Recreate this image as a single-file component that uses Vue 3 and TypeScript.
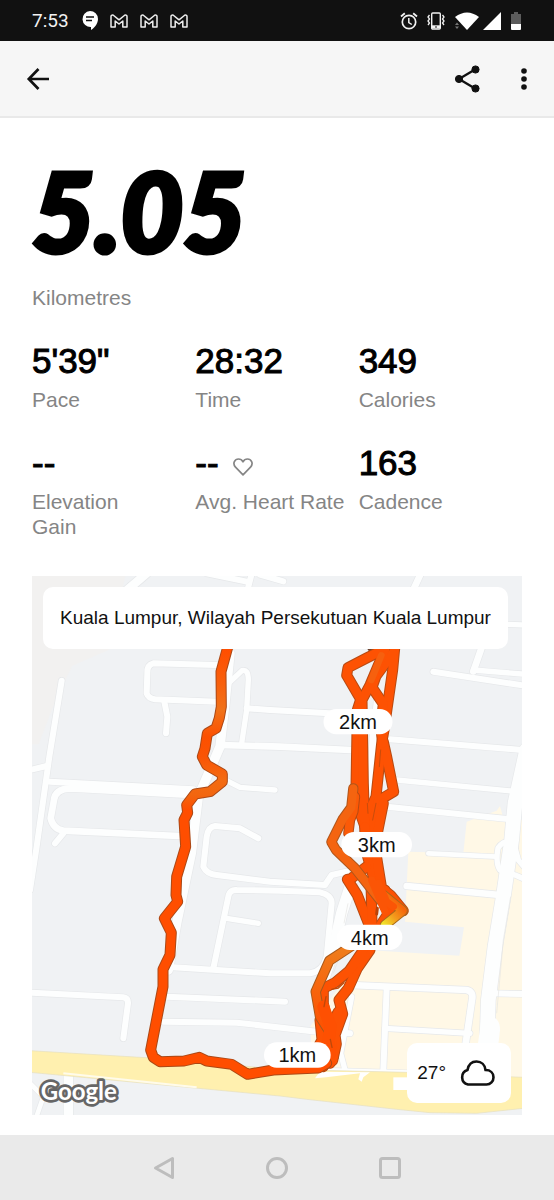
<script setup lang="ts">
interface Stat {
  label: string
  value: string
  heart?: boolean
}

interface Road {
  d: string
  w: number
}

interface Pin {
  text: string
  x: number
  y: number
  w: number
}

const stats: Stat[] = [
  { label: 'Pace', value: '5\'39"' },
  { label: 'Time', value: '28:32' },
  { label: 'Calories', value: '349' },
  { label: 'Elevation Gain', value: '--' },
  { label: 'Avg. Heart Rate', value: '--', heart: true },
  { label: 'Cadence', value: '163' },
]

const mails = [1, 2, 3]

const northWest: Road[] = [
  { d: 'M95 332L58 560L20 830L0 960', w: 18 },
  { d: 'M0 600L50 588', w: 18 },
  { d: 'M60 635L350 650L490 658', w: 18 },
  { d: 'M470 674L120 655Q75 658 72 690L62 745Q70 778 100 782L445 798', w: 20 },
  { d: 'M75 820L100 790', w: 18 },
  { d: 'M560 285L370 280Q350 285 352 310L350 370Q355 385 375 388L560 395', w: 18 },
  { d: 'M402 390L412 440L408 490', w: 18 },
  { d: 'M590 345L636 302Q655 296 655 330L650 420L635 520', w: 16 },
  { d: 'M650 415L720 420L940 432', w: 18 },
  { d: 'M570 525L750 530L960 540', w: 20 },
  { d: 'M590 632L630 652L735 660', w: 16 },
  { d: 'M600 250L585 400L570 530L505 680L484 850L440 1060L415 1200', w: 28 },
  { d: 'M280 70L350 10', w: 26 },
  { d: 'M530 10L650 35M650 70L668 0M690 14L760 34', w: 18 },
  { d: 'M685 805L630 775L555 768Q535 770 530 800L520 890Q530 912 560 915L720 935L885 945L905 915L950 905', w: 18 },
]

const northEast: Road[] = [
  { d: 'M425 70L455 5', w: 20 },
  { d: 'M715 163L770 165', w: 16 },
  { d: 'M610 304L636 230', w: 20 },
  { d: 'M610 300L770 313', w: 16 },
  { d: 'M490 305L770 348', w: 18 },
  { d: 'M360 508L760 540', w: 18 },
  { d: 'M380 630L745 665', w: 16 },
  { d: 'M350 710L725 748', w: 18 },
  { d: 'M325 390L312 500L300 700', w: 26 },
]

const southWest: Road[] = [
  { d: 'M550 385L596 165Q602 148 620 150L750 152L870 157Q905 165 905 190L890 350Q880 395 840 400L720 400L430 382', w: 18 },
  { d: 'M590 235L685 250', w: 16 },
  { d: 'M410 470L765 485', w: 18 },
  { d: 'M400 545L620 548L860 575L960 580', w: 18 },
  { d: 'M0 458L280 472Q295 474 294 490L280 595', w: 18 },
  { d: 'M115 708L115 840', w: 28 },
  { d: 'M0 730L26 756L40 770L16 840', w: 14 },
]

const southEast: Road[] = [
  { d: 'M475 40L680 50', w: 14 },
  { d: 'M410 138L690 165', w: 20 },
  { d: 'M250 110L215 220L190 330L150 450', w: 34 },
  { d: 'M240 435L590 450Q612 455 606 480L585 625', w: 20 },
  { d: 'M350 445L340 690', w: 18 },
  { d: 'M345 565L600 580', w: 16 },
  { d: 'M660 460L770 462', w: 18 },
  { d: 'M245 470L212 640L225 690', w: 16 },
  { d: 'M150 690L420 698', w: 14 },
  { d: 'M770 -270L735 -110L725 0L716 60L700 170L675 320L655 480L650 640', w: 44 },
  { d: 'M770 120L735 105L690 90Q676 70 684 24Q700 0 730 4L745 60L770 90', w: 16 },
]

// Repeated laps on the eastern side of the run.
const lapsNorth: string[] = [
  'M375 225L368 300L342 480L335 520L318 680L300 720L312 810',
  'M340 515L350 560L371 665L325 692L315 735L300 800',
  'M368 250L318 318L306 352L340 402L332 470L338 520',
  'M330 244L290 264L234 293L230 316L272 388L262 420L258 650L260 700L285 770',
  'M345 238L300 345L276 390L280 640L285 790',
  'M340 700L318 810',
]

const lapsSouth: string[] = [
  'M285 -40L290 40L310 110L345 200',
  'M318 -10L318 40L335 145L362 166L400 212',
  'M290 80L240 118L232 118L262 165L300 262',
  'M303 130L306 250',
  'M345 150L365 205L330 258',
  'M300 330L262 385L235 445L207 480L218 522L195 585L199 612L188 662',
  'M280 330L238 392L195 428L160 445',
  'M160 445L160 490L175 560L170 610L180 670',
  'M205 515L180 560L190 650',
  'M150 540L156 600L145 620L160 680',
]

const pins: Pin[] = [
  { text: '2km', x: 978, y: 437, w: 207 },
  { text: '3km', x: 1034, y: 806, w: 212 },
  { text: '4km', x: 1013, y: 1084, w: 196 },
  { text: '1km', x: 796, y: 1437, w: 200 },
]
</script>

<template>
  <div class="screen">
    <div class="status">
      <span class="clock">7:53</span>
      <svg class="chat" width="16" height="19" viewBox="0 0 16 19">
        <path d="M8 0a8 8 0 0 1 8 8c0 5-4 9-7 11v-3a8 8 0 1 1-1-16z" fill="#fff" />
        <path d="M4 6h8M4 9.500h6" stroke="#111" stroke-width="1.500" />
      </svg>
      <svg v-for="m in mails" :key="m" class="mail" width="18" height="14" viewBox="0 0 18 14">
        <path d="M1 2.500Q1 .8 3 1L9 5.800L15 1Q17 .8 17 2.500V13H12.800V7L9 10L5.200 7V13H1Z" fill="none" stroke="#eee" stroke-width="1.500" stroke-linejoin="round" />
      </svg>
      <span class="spacer"></span>
      <svg class="alarm" width="18" height="18" viewBox="0 0 18 18" fill="none" stroke="#f2f2f2">
        <circle cx="9" cy="10" r="6.700" stroke-width="1.700" />
        <path d="M8.800 6v4.500l3 2" stroke-width="1.500" />
        <path d="M1 4.500L4.800 1.300M17 4.500L13.200 1.300" stroke-width="1.800" />
      </svg>
      <svg class="vibrate" width="18" height="18" viewBox="0 0 18 18" fill="none" stroke="#f2f2f2">
        <rect x="4.700" y="1" width="8.600" height="16" rx="1" stroke-width="1.400" />
        <path d="M5 14.800h8" stroke-width="3" />
        <path d="M8 15h2" stroke="#111" />
        <path d="M2.500 3L1 5l1.500 2L1 9l1.500 2L1 13M15.500 3L17 5l-1.500 2L17 9l-1.500 2L17 13" stroke-width="1.300" />
      </svg>
      <svg class="wifi" width="24" height="18" viewBox="0 0 24 18">
        <path d="M0 5Q12-4 24 5L12 18Z" fill="#fff" />
        <path d="M0 13l2-2.500 2 2.500zM0 14.500l2 2.500 2-2.500z" fill="#777" />
      </svg>
      <svg class="signal" width="18" height="18" viewBox="0 0 18 18"><path d="M18 0V18H0Z" fill="#fff" /></svg>
      <svg width="10" height="18" viewBox="0 0 10 18">
        <path d="M3 0h4v2h3v10H0V2h3z" fill="#5c5c5c" />
        <path d="M0 12h10v5q0 1-1 1H1q-1 0-1-1z" fill="#fff" />
      </svg>
    </div>

    <header class="bar">
      <button class="icon-button" type="button" aria-label="Back">
        <svg width="24" height="24" viewBox="0 0 24 24" fill="none" stroke="#111" stroke-width="2.700">
          <path d="M23 12H3M12.500 2L2.800 12L12.500 22" />
        </svg>
      </button>
      <span class="spacer"></span>
      <button class="icon-button" type="button" aria-label="Share">
        <svg width="28" height="28" viewBox="0 0 28 28" fill="#111" stroke="#111">
          <path d="M22 4.500L6 14L22 23.500" fill="none" stroke-width="2.300" />
          <circle cx="22.500" cy="4.500" r="3.600" /><circle cx="6" cy="14" r="3.600" /><circle cx="22.500" cy="23.500" r="3.600" />
        </svg>
      </button>
      <button class="icon-button" type="button" aria-label="More options">
        <svg width="24" height="24" viewBox="0 0 24 24" fill="#111">
          <circle cx="12" cy="4" r="2.800" /><circle cx="12" cy="12" r="2.800" /><circle cx="12" cy="20" r="2.800" />
        </svg>
      </button>
    </header>

    <main class="content">
      <h1 class="distance">5.05</h1>
      <p class="unit">Kilometres</p>

      <dl class="stats">
        <div v-for="stat in stats" :key="stat.label" class="stat">
          <dt :class="{ nowrap: stat.heart }">{{ stat.label }}</dt>
          <dd>
            {{ stat.value }}
            <svg v-if="stat.heart" class="heart" width="20" height="18" viewBox="0 0 20 18">
              <path d="M10 16.800L2.500 9.200C-1 5 2 1 5.500 1Q8.500 1 10 3.800Q11.500 1 14.500 1C18 1 21 5 17.500 9.200Z" fill="none" stroke="#858585" stroke-width="1.700" stroke-linejoin="round" />
            </svg>
          </dd>
        </div>
      </dl>

      <section class="map" aria-label="Route map">
        <svg class="map-art" viewBox="0 0 1470 1617">
          <defs>
            <linearGradient id="heat" gradientUnits="userSpaceOnUse" x1="0" y1="240" x2="0" y2="740">
              <stop offset="0" stop-color="#ff4e00" />
              <stop offset="0.200" stop-color="#f8600c" />
              <stop offset="0.360" stop-color="#f07219" />
              <stop offset="0.520" stop-color="#fc5000" />
              <stop offset="0.640" stop-color="#fa5405" />
              <stop offset="0.780" stop-color="#f36b12" />
              <stop offset="0.870" stop-color="#f2660f" />
              <stop offset="0.960" stop-color="#ff4e00" />
            </linearGradient>
            <linearGradient id="turn" gradientUnits="userSpaceOnUse" x1="400" y1="205" x2="345" y2="255">
              <stop offset="0" stop-color="#f66509" />
              <stop offset="0.500" stop-color="#f39a1c" />
              <stop offset="1" stop-color="#f0e02a" />
            </linearGradient>
            <linearGradient id="fade" gradientUnits="userSpaceOnUse" x1="200" y1="330" x2="150" y2="560">
              <stop offset="0" stop-color="#ef7c1c" />
              <stop offset="1" stop-color="#fd5202" />
            </linearGradient>
          </defs>

          <rect width="1470" height="1617" fill="#f0f2f4" />
          <path d="M0 0H280L230 222L120 270L60 400L20 505H0Z" fill="#f2f1f0" />
          <g transform="translate(714 792)">
            <path d="M590 -55L680 -88L690 -102L700 -65L760 -60V715L130 690L120 560L290 330L568 347L582 262L405 245L415 35L580 40Z" fill="#fff8e6" />
          </g>

          <g stroke="#e6e8ea" class="road casing">
            <g transform="translate(-6 -18)"><path v-for="r in northWest" :key="r.d" :d="r.d" :stroke-width="r.w + 4" /></g>
            <g transform="translate(714 -18)"><path v-for="r in northEast" :key="r.d" :d="r.d" :stroke-width="r.w + 4" /></g>
            <g transform="translate(-6 792)"><path v-for="r in southWest" :key="r.d" :d="r.d" :stroke-width="r.w + 4" /></g>
            <g transform="translate(714 792)"><path v-for="r in southEast" :key="r.d" :d="r.d" :stroke-width="r.w + 4" /></g>
          </g>
          <g stroke="#fdfefe" class="road">
            <g transform="translate(-6 -18)"><path v-for="r in northWest" :key="r.d" :d="r.d" :stroke-width="r.w" /></g>
            <g transform="translate(714 -18)"><path v-for="r in northEast" :key="r.d" :d="r.d" :stroke-width="r.w" /></g>
            <g transform="translate(-6 792)"><path v-for="r in southWest" :key="r.d" :d="r.d" :stroke-width="r.w" /></g>
            <g transform="translate(714 792)"><path v-for="r in southEast" :key="r.d" :d="r.d" :stroke-width="r.w" /></g>
          </g>

          <g transform="translate(714 792)" fill="none" stroke="#e6e5e2" stroke-width="2">
            <path d="M722 170L700 300L680 520" />
            <path d="M234 190L222 250M205 360L190 400" />
          </g>
          <g transform="translate(-6 792)">
            <path d="M1355 530Q1410 520 1410 570L1402 640H1340Z" fill="#fdfefe" />
            <path d="M0 632L380 655L750 688L1130 697L1480 712V805L1340 820L1200 818L1100 808L830 778L750 768L400 735L0 697Z" fill="#fff0af" stroke="#e5dfc0" stroke-width="2" />
            <path d="M100 700L500 742" stroke="#fffbea" stroke-width="6" />
            <path d="M870 695L1020 697L1000 712L995 725L985 718L990 700L888 712L855 715Z" fill="#fff" />
            <path d="M1090 712H1140V750H1090Z" fill="#fff" />
          </g>

          <g class="route">
            <circle cx="1032" cy="208" r="28" fill="#6d4430" />
            <g stroke="#b74a12" stroke-width="33">
              <g transform="translate(714 -18)"><path v-for="d in lapsNorth" :key="d" :d="d" /></g>
              <g transform="translate(714 792)"><path v-for="d in lapsSouth" :key="d" :d="d" /></g>
            </g>
            <g stroke="#fd5203" stroke-width="27">
              <g transform="translate(714 -18)"><path v-for="d in lapsNorth" :key="d" :d="d" /></g>
              <g transform="translate(714 792)"><path v-for="d in lapsSouth" :key="d" :d="d" /></g>
            </g>
            <g transform="translate(714 -18)">
              <path d="M334 256L304 330" stroke="#f6600e" stroke-width="20" />
              <path d="M318 700L308 750M292 700L294 730M332 540L328 590" stroke="#c94c0b" stroke-width="3" />
            </g>
            <g transform="translate(714 792)">
              <path d="M250 -155L244 -98L218 -62L184 6L198 30L255 85L330 180" stroke="#b0561a" stroke-width="31" />
              <path d="M255 -130L250 -85L240 -60L235 -20" stroke="#b74a12" stroke-width="31" />
              <path d="M255 -130L250 -85L240 -60L235 -20" stroke="#fa5a08" stroke-width="25" />
              <path d="M250 -155L244 -98L218 -62L184 6L198 30L255 85L330 180" stroke="#f46410" stroke-width="25" />
              <path d="M340 165L398 212L345 255" stroke="#a8691a" stroke-width="31" />
              <path d="M340 165L398 212L345 255" stroke="url(#turn)" stroke-width="25" />
              <path d="M325 130L350 185L370 200M305 120L345 215" stroke="#fb5506" stroke-width="22" />
              <path d="M322 205L320 222" stroke="#b9430a" stroke-width="9" />
              <path d="M245 318L178 362L137 455L150 530L175 570" stroke="#a8591a" stroke-width="31" />
              <path d="M245 318L178 362L137 455L150 530L175 570" stroke="url(#fade)" stroke-width="25" />
              <path d="M160 500L182 560L175 600L180 640" stroke="#fe5002" stroke-width="36" />
              <path d="M181 598L186 622M168 470L162 500M222 428L205 444L185 448" stroke="#c04809" stroke-width="4" />
            </g>
            <g transform="translate(-6 -18)">
              <path d="M595 225L573 305L574 410Q570 445 558 475L532 490L525 535L517 560L530 585L577 612L577 635L540 665L495 672L470 705L473 728L462 750L467 830L440 920L438 975L443 995L403 1045L424 1088L420 1155L399 1198L399 1250L362 1440L370 1462L390 1475L462 1473L508 1462L530 1473L605 1483L653 1513L730 1500L865 1494L890 1480" stroke="#ab4815" stroke-width="33" />
              <path d="M595 225L573 305L574 410Q570 445 558 475L532 490L525 535L517 560L530 585L577 612L577 635L540 665L495 672L470 705L473 728L462 750L467 830L440 920L438 975L443 995L403 1045L424 1088L420 1155L399 1198L399 1250L362 1440L370 1462L390 1475L462 1473L508 1462L530 1473L605 1483L653 1513L730 1500L865 1494L890 1480" stroke="url(#heat)" stroke-width="27" />
            </g>
          </g>

          <g v-for="pin in pins" :key="pin.text">
            <rect :x="pin.x - pin.w / 2" :y="pin.y - 38" :width="pin.w" height="76" rx="38" fill="#fff" />
            <text class="pin-text" :x="pin.x" :y="pin.y + 22">{{ pin.text }}</text>
          </g>

          <text class="logo" x="26" y="1572">Google</text>
        </svg>

        <div class="place">Kuala Lumpur, Wilayah Persekutuan Kuala Lumpur</div>

        <div class="weather">
          <span>27°</span>
          <svg width="36" height="26" viewBox="0 0 36 26">
            <path d="M9 24.500a7.500 7.500 0 0 1-.500-14.500C9.500 4.500 13 1.500 17.500 1.500c5 0 8.500 3.500 9 8.500c5 0 8 3.200 8 7.200s-3 7.300-7 7.300z" fill="none" stroke="#111" stroke-width="2.600" stroke-linejoin="round" />
          </svg>
        </div>
      </section>
    </main>

    <nav class="system-nav">
      <button class="icon-button" type="button" aria-label="System back">
        <svg width="22" height="24" viewBox="0 0 22 24"><path d="M2.500 12L19.500 2.500V21.500Z" class="nav-shape" /></svg>
      </button>
      <button class="icon-button" type="button" aria-label="Home">
        <svg width="24" height="24" viewBox="0 0 24 24"><circle cx="12" cy="12" r="9.500" class="nav-shape" /></svg>
      </button>
      <button class="icon-button" type="button" aria-label="Recent apps">
        <svg width="24" height="24" viewBox="0 0 24 24"><rect x="2.500" y="2.500" width="19" height="19" rx="2" class="nav-shape" /></svg>
      </button>
    </nav>
  </div>
</template>

<style>
body {
  margin: 0;
  background: #fff;
}
</style>

<style scoped>
.screen {
  display: flex;
  flex-direction: column;
  min-height: 100vh;
  color: #111;
  font-family: "Liberation Sans", Arial, sans-serif;
}

.screen svg {
  display: block;
  flex: none;
}

.status {
  display: flex;
  align-items: center;
  height: 41px;
  padding: 0 33px 0 32px;
  box-sizing: border-box;
  background: #111;
}

.clock {
  margin-right: 13px;
  color: #f2f2f2;
  font: 19px/24px Roboto, sans-serif;
}

.chat {
  margin-right: 12px;
}

.mail {
  margin-right: 12px;
}

.spacer {
  flex: 1;
}

.alarm {
  margin-right: 9px;
}

.vibrate,
.signal {
  margin-right: 10px;
}

.wifi {
  margin-right: 4px;
}

.bar {
  display: flex;
  align-items: center;
  height: 77px;
  padding: 0 6px 0 14px;
  box-sizing: border-box;
  background: #f6f6f6;
  border-bottom: 2px solid #e9e9e9;
}

.icon-button {
  display: flex;
  align-items: center;
  justify-content: center;
  width: 48px;
  height: 48px;
  padding: 0;
  border: 0;
  background: none;
}

.bar .icon-button + .icon-button {
  margin-left: 9px;
}

.content {
  flex: 1;
  padding: 42px 32px 20px;
}

.distance {
  margin: 0;
  color: #000;
  font: italic 900 108px/100px Lato, sans-serif;
  -webkit-text-stroke: 5px #000;
}

.unit {
  margin: 25px 0 31px;
  color: #858585;
  font-size: 21px;
  line-height: 25px;
}

.stats {
  display: grid;
  grid-template-columns: repeat(3, minmax(0, 1fr));
  row-gap: 31px;
  margin: 0 0 37px;
}

.stat {
  display: flex;
  flex-direction: column-reverse;
  justify-content: flex-end;
  gap: 6px;
}

.stat dt {
  padding-right: 32px;
  color: #858585;
  font-size: 21px;
  line-height: 25px;
}

.stat dt.nowrap {
  padding-right: 0;
  white-space: nowrap;
}

.stat dd {
  display: flex;
  align-items: center;
  gap: 14px;
  margin: 0;
  color: #000;
  font-size: 35px;
  line-height: 40px;
  -webkit-text-stroke: 1px #000;
}

.heart {
  margin-top: 8px;
}

.map {
  position: relative;
}

.map-art {
  width: 100%;
  height: auto;
}

.road,
.route {
  fill: none;
  stroke-linecap: round;
  stroke-linejoin: round;
}

.pin-text {
  fill: #111;
  font-size: 60px;
  text-anchor: middle;
}

.logo {
  fill: #fff;
  stroke: #666;
  stroke-width: 16px;
  stroke-linejoin: round;
  paint-order: stroke;
  font-family: Lato, sans-serif;
  font-size: 72px;
  font-weight: 700;
}

.place {
  position: absolute;
  top: 11px;
  right: 14px;
  left: 11px;
  padding: 19px 8px;
  border-radius: 10px;
  background: #fff;
  font-size: 19px;
  line-height: 24px;
  text-align: center;
}

.weather {
  position: absolute;
  right: 11px;
  bottom: 12px;
  display: flex;
  align-items: center;
  gap: 13px;
  padding: 17px 16px 17px 10px;
  border-radius: 10px;
  background: #fff;
  font-size: 19px;
  line-height: 26px;
}

.system-nav {
  display: flex;
  align-items: center;
  justify-content: center;
  gap: 65px;
  height: 65px;
  background: #eaeaea;
}

.nav-shape {
  fill: none;
  stroke: #bdbdbd;
  stroke-width: 3px;
  stroke-linejoin: round;
}
</style>
